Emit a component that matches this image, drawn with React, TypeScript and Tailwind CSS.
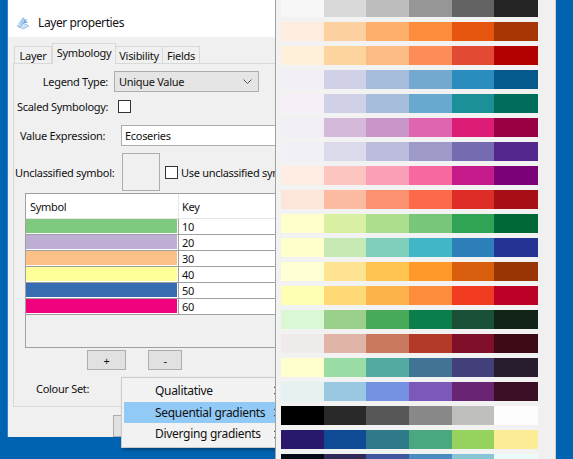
import React from "react";

const palettes: string[][] = [
  ["#f7f7f7", "#d9d9d9", "#bdbdbd", "#969696", "#636363", "#252525"],
  ["#feedde", "#fdd0a2", "#fdae6b", "#fd8d3c", "#e6550d", "#a63603"],
  ["#fef0d9", "#fdd49e", "#fdbb84", "#fc8d59", "#e34a33", "#b30000"],
  ["#f1eef6", "#d0d1e6", "#a6bddb", "#74a9cf", "#2b8cbe", "#045a8d"],
  ["#f6eff7", "#d0d1e6", "#a6bddb", "#67a9cf", "#1c9099", "#016c59"],
  ["#f1eef6", "#d4b9da", "#c994c7", "#df65b0", "#dd1c77", "#980043"],
  ["#f2f0f7", "#dadaeb", "#bcbddc", "#9e9ac8", "#756bb1", "#54278f"],
  ["#feebe2", "#fcc5c0", "#fa9fb5", "#f768a1", "#c51b8a", "#7a0177"],
  ["#fee5d9", "#fcbba1", "#fc9272", "#fb6a4a", "#de2d26", "#a50f15"],
  ["#ffffcc", "#d9f0a3", "#addd8e", "#78c679", "#31a354", "#006837"],
  ["#ffffcc", "#c7e9b4", "#7fcdbb", "#41b6c4", "#2c7fb8", "#253494"],
  ["#ffffd4", "#fee391", "#fec44f", "#fe9929", "#d95f0e", "#993404"],
  ["#ffffb2", "#fed976", "#feb24c", "#fd8d3c", "#f03b20", "#bd0026"],
  ["#d9f8d3", "#9bcf8c", "#48aa59", "#0a7e4b", "#1a5037", "#122318"],
  ["#efebeb", "#e0b5a8", "#c97a5e", "#b33a28", "#800f29", "#3e0a16"],
  ["#fffecd", "#99dda5", "#53aaa1", "#417395", "#423f7a", "#271d2e"],
  ["#e6f1f2", "#99c8e0", "#7592e2", "#7c58bb", "#6a2474", "#3b1027"],
  ["#000000", "#292929", "#575757", "#888888", "#bfbfbd", "#fefdfd"],
  ["#2a196b", "#0f4a95", "#2e7a89", "#4aa880", "#95d35e", "#fcec96"],
  ["#050a17", "#312a58", "#3f55a0", "#4a8cbf", "#88c6d6", "#e9fbf6"],
];

const colWidths = ["w-[43px]", "w-[42px]", "w-[43px]", "w-[43px]", "w-[42px]", "w-[44px]"];

const rows = [
  { key: "10", color: "#7fc97f" },
  { key: "20", color: "#beaed4" },
  { key: "30", color: "#fdc086" },
  { key: "40", color: "#ffff99" },
  { key: "50", color: "#386cb0" },
  { key: "60", color: "#f0027f" },
];

function TitleIcon() {
  return (
    <svg width="14" height="15" viewBox="0 0 14 15">
      <path d="M1 11 L7 8 L13 11 L7 14 Z" fill="#cfe3f5" stroke="#8fb9e0" strokeWidth="0.8" />
      <path d="M2 9 L7 2 L8 8 Z" fill="#a9cdef" />
      <path d="M7 2 L12 8 L8 8 Z" fill="#7fb2e3" />
      <path d="M3 13 L11 4" stroke="#6aa3da" strokeWidth="0.8" />
    </svg>
  );
}

function Chevron() {
  return (
    <svg width="6" height="9" viewBox="0 0 6 9">
      <path d="M1 0.8 L4.8 4.5 L1 8.2" fill="none" stroke="#333" strokeWidth="1" />
    </svg>
  );
}

export default function App() {
  return (
    <div className="relative w-[573px] h-[459px] overflow-hidden bg-[#0063b1] font-['Noto_Sans',sans-serif] text-[11px] tracking-[-0.3px] text-[#111] leading-none whitespace-nowrap">
      {/* Dialog window */}
      <div className="absolute left-[7px] top-0 w-[300px] h-[437px] border-l border-[#3b7fc4] bg-[#f0f0f0] flex flex-col overflow-hidden">
        {/* Title bar */}
        <div className="h-[37px] bg-white flex items-center pl-[8px] pt-[8px] shrink-0">
          <TitleIcon />
          <span className="ml-[8px] text-[12px] tracking-[-0.4px]">Layer properties</span>
        </div>

        {/* Tab strip */}
        <div className="flex items-end ml-[6px] mt-[6px] h-[20px] relative z-10">
          <div className="h-[17px] w-[38px] border border-b-0 border-[#d9d9d9] bg-[#f0f0f0] flex items-center justify-center">Layer</div>
          <div className="h-[21px] w-[64px] -mb-[1px] border border-b-0 border-[#d9d9d9] bg-[#f0f0f0] flex items-center justify-center pb-[3px]">Symbology</div>
          <div className="h-[17px] w-[47px] border border-b-0 border-l-0 border-[#d9d9d9] bg-[#f0f0f0] flex items-center justify-center">Visibility</div>
          <div className="h-[17px] w-[37px] border border-b-0 border-l-0 border-[#d9d9d9] bg-[#f0f0f0] flex items-center justify-center">Fields</div>
        </div>

        {/* Tab panel */}
        <div className="ml-[5px] h-[344px] border border-[#d9d9d9] flex flex-col shrink-0">
          {/* Legend type */}
          <div className="flex items-center mt-[7px] h-[21px]">
            <div className="w-[94px] text-right">Legend Type:</div>
            <div className="ml-[6px] w-[145px] h-[21px] bg-[#e5e5e5] border border-[#adadad] flex items-center justify-between pl-[4px] pr-[6px]">
              <span>Unique Value</span>
              <svg width="9" height="6" viewBox="0 0 9 6">
                <path d="M0.5 0.5 L4.5 4.5 L8.5 0.5" fill="none" stroke="#555" strokeWidth="1" />
              </svg>
            </div>
          </div>

          {/* Scaled symbology */}
          <div className="flex items-center mt-[8px] h-[13px]">
            <div className="w-[104px] pl-[3px]">Scaled Symbology:</div>
            <div className="w-[13px] h-[13px] border border-[#333333] bg-white" />
          </div>

          {/* Value expression */}
          <div className="flex items-center mt-[12px] h-[21px]">
            <div className="w-[107px] pl-[6px]">Value Expression:</div>
            <div className="flex-1 h-[21px] bg-white border border-[#abadb3] flex items-center pl-[3px]">Ecoseries</div>
          </div>

          {/* Unclassified symbol */}
          <div className="flex items-center mt-[7px] h-[38px]">
            <div className="w-[108px] pl-[1px]">Unclassified symbol:</div>
            <div className="w-[38px] h-[38px] border border-[#adadad] bg-[#f0f0f0]" />
            <div className="ml-[5px] w-[13px] h-[13px] border border-[#333333] bg-white" />
            <span className="ml-[3px]">Use unclassified symbol</span>
          </div>

          {/* Table */}
          <div className="ml-[11px] mt-[2px] h-[155px] border border-[#a0a0a0] bg-[#f0f0f0] flex flex-col">
            <div className="flex h-[25px] bg-white border-b border-[#e5e5e5]">
              <div className="w-[152px] flex items-center pl-[4px]">Symbol</div>
              <div className="border-l border-[#e5e5e5] flex-1 flex items-center pl-[3px]">Key</div>
            </div>
            {rows.map((r) => (
              <div key={r.key} className="flex h-[16px] border-b border-[#a0a0a0] bg-white">
                <div className="w-[152px] pr-[1px] pb-[1px]">
                  <div className="h-full w-full" style={{ backgroundColor: r.color }} />
                </div>
                <div className="border-l border-[#a0a0a0] flex-1 flex items-center pl-[3px]">{r.key}</div>
              </div>
            ))}
          </div>

          {/* Buttons */}
          <div className="flex mt-[2px] h-[20px]">
            <div className="ml-[73px] w-[39px] h-[20px] bg-[#e1e1e1] border border-[#adadad] flex items-center justify-center">+</div>
            <div className="ml-[22px] w-[34px] h-[20px] bg-[#e1e1e1] border border-[#adadad] flex items-center justify-center">-</div>
          </div>

          {/* Colour set */}
          <div className="mt-[13px] pl-[22px]">Colour Set:</div>
        </div>

        {/* Bottom buttons */}
        <div className="flex mt-[8px] ml-[105px]">
          <div className="w-[80px] h-[22px] bg-[#e1e1e1] border border-[#adadad]" />
        </div>
      </div>

      {/* Context menu */}
      <div className="absolute left-[121px] top-[377px] w-[170px] h-[71px] bg-[#f2f2f2] border border-[#cccccc] shadow-[2px_2px_3px_rgba(0,0,0,0.3)] flex flex-col py-[2px] z-20 text-[12px]">
        <div className="h-[22px] mx-[2px] flex items-center justify-between pl-[31px] pr-[9px]">
          <span>Qualitative</span>
          <Chevron />
        </div>
        <div className="h-[22px] mx-[2px] bg-[#91c9f7] flex items-center justify-between pl-[31px] pr-[9px]">
          <span>Sequential gradients</span>
          <Chevron />
        </div>
        <div className="h-[22px] mx-[2px] flex items-center justify-between pl-[31px] pr-[9px]">
          <span>Diverging gradients</span>
          <Chevron />
        </div>
      </div>

      {/* Palette popup */}
      <div className="absolute left-[275px] top-0 w-[281px] h-[459px] bg-[#f2f2f2] border-l border-r border-l-[#a0a0a0] border-r-[#d0d0d0] z-30 flex">
        <div className="flex flex-col gap-[5px] pl-[5px] -mt-[2px]">
          {palettes.map((p, i) => (
            <div key={i} className="flex h-[19px] shrink-0">
              {p.map((c, j) => (
                <div key={j} className={colWidths[j] + " h-full"} style={{ backgroundColor: c }} />
              ))}
            </div>
          ))}
        </div>
        <div className="flex-1 ml-[1px] bg-[#f0f0f0]" />
      </div>
    </div>
  );
}
